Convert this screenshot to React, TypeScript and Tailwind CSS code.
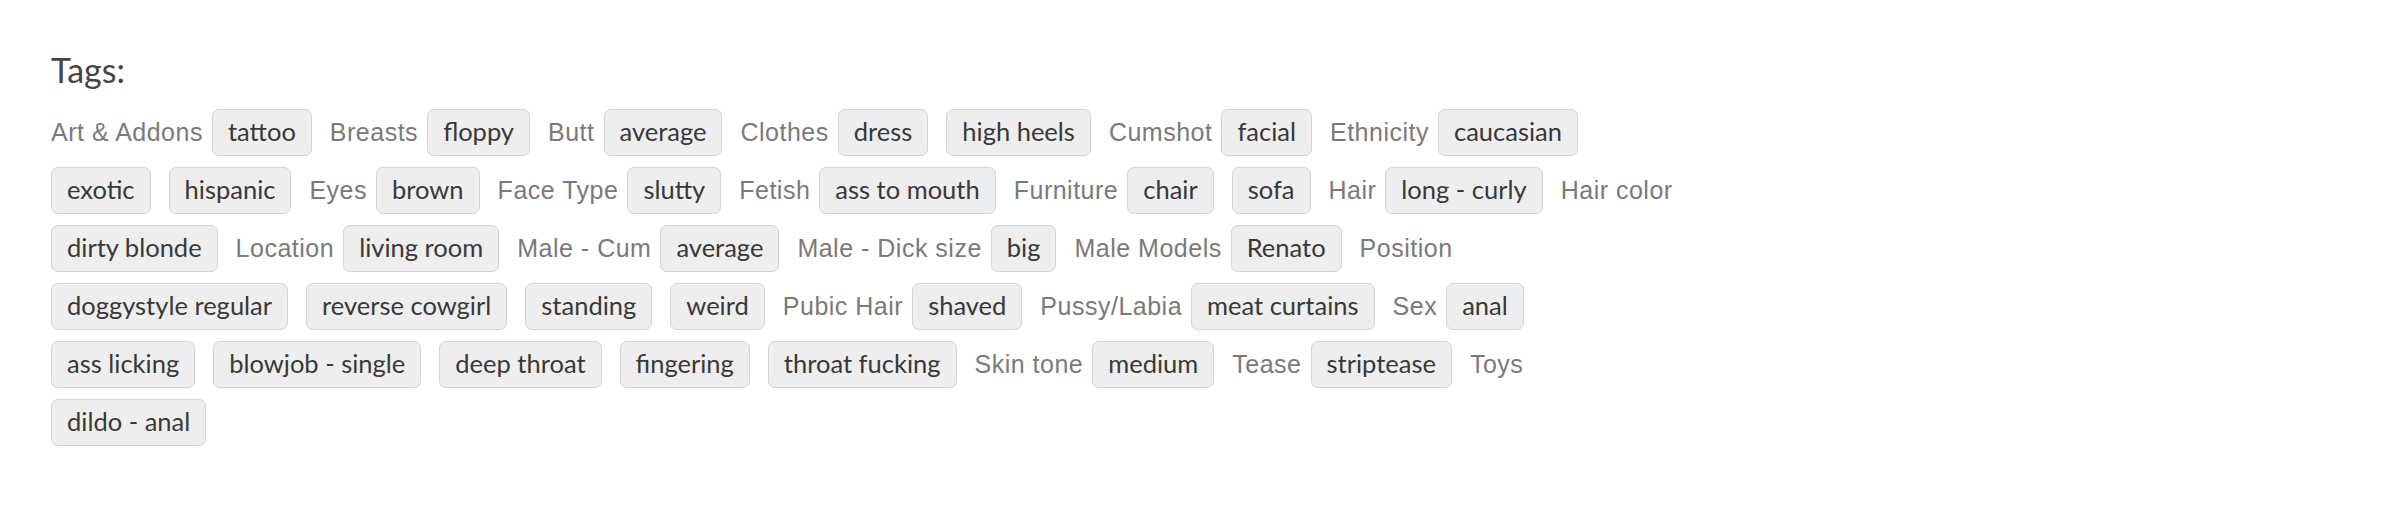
import React from "react";

type Item = { t: "l" | "g"; s: string };

const L = (s: string): Item => ({ t: "l", s });
const G = (s: string): Item => ({ t: "g", s });

const items: Item[] = [
  L("Art & Addons"), G("tattoo"),
  L("Breasts"), G("floppy"),
  L("Butt"), G("average"),
  L("Clothes"), G("dress"), G("high heels"),
  L("Cumshot"), G("facial"),
  L("Ethnicity"), G("caucasian"), G("exotic"), G("hispanic"),
  L("Eyes"), G("brown"),
  L("Face Type"), G("slutty"),
  L("Fetish"), G("ass to mouth"),
  L("Furniture"), G("chair"), G("sofa"),
  L("Hair"), G("long - curly"),
  L("Hair color"), G("dirty blonde"),
  L("Location"), G("living room"),
  L("Male - Cum"), G("average"),
  L("Male - Dick size"), G("big"),
  L("Male Models"), G("Renato"),
  L("Position"), G("doggystyle regular"), G("reverse cowgirl"), G("standing"), G("weird"),
  L("Pubic Hair"), G("shaved"),
  L("Pussy/Labia"), G("meat curtains"),
  L("Sex"), G("anal"), G("ass licking"), G("blowjob - single"), G("deep throat"), G("fingering"), G("throat fucking"),
  L("Skin tone"), G("medium"),
  L("Tease"), G("striptease"),
  L("Toys"), G("dildo - anal"),
];

export default function App() {
  return (
    <div className="w-[2408px] h-[520px] bg-white pl-[51px] pt-[49px]">
      <h2 className="font-['Lato',sans-serif] text-[34px] leading-[41px] text-[#454545] mb-[19px]">
        Tags:
      </h2>
      <div className="w-[1645px] flex flex-wrap items-center gap-y-[11px]">
        {items.map((it, i) =>
          it.t === "l" ? (
            <span
              key={i}
              className="font-['Liberation_Sans',Arial,sans-serif] text-[25px] tracking-[0.5px] leading-[47px] text-[#7a7a7a] mr-[9px] whitespace-nowrap"
            >
              {it.s}
            </span>
          ) : (
            <span
              key={i}
              className="font-['Lato',sans-serif] text-[25.5px] leading-[43px] pb-[2px] px-[15px] border border-[#d3d3d3] bg-[#eeeeee] rounded-[7px] text-[#383838] mr-[18px] whitespace-nowrap"
            >
              {it.s}
            </span>
          )
        )}
      </div>
    </div>
  );
}
